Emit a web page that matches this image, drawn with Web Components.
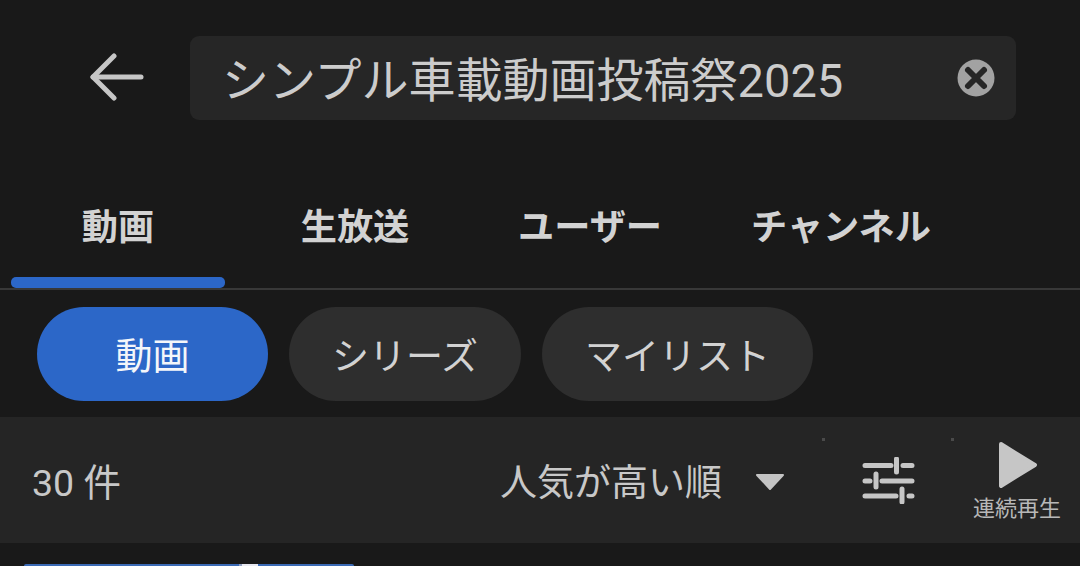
<!DOCTYPE html>
<html lang="ja">
<head>
<meta charset="utf-8">
<title>検索</title>
<style>
    html, body {
        margin: 0;
        height: 566px;
        overflow: hidden;
        background: #191919;
        color: #ccc;
        font-family: Roboto, "Noto Sans CJK JP", sans-serif;
    }
</style>
</head>
<body>
<search-header query="シンプル車載動画投稿祭2025"></search-header>
<tab-strip>
    <tab-item active>動画</tab-item>
    <tab-item>生放送</tab-item>
    <tab-item>ユーザー</tab-item>
    <tab-item>チャンネル</tab-item>
</tab-strip>
<chip-row>
    <filter-chip active style="width:231px">動画</filter-chip>
    <filter-chip style="width:232px">シリーズ</filter-chip>
    <filter-chip style="width:271px">マイリスト</filter-chip>
</chip-row>
<sort-bar count="30 件" sort="人気が高い順"></sort-bar>
<video-peek></video-peek>

<script>
class SearchHeader extends HTMLElement {
    constructor(){
        super();
        this.attachShadow({mode: "open"});
        this.shadowRoot.innerHTML = `
<style>
    :host {
        display: flex;
        align-items: center;
        height: 84px;
        padding: 36px 64px 0 90px;
    }
    .back {
        width: 54px;
        height: 48px;
        margin: 0 46px 2px 0;
        flex: none;
    }
    .box {
        flex: 1;
        height: 84px;
        display: flex;
        align-items: center;
        justify-content: space-between;
        padding: 0 21px 0 32px;
        background: #262626;
        border-radius: 9px;
    }
    .query {
        font-size: 47px;
        color: #ccc;
        white-space: nowrap;
        margin-bottom: 4px;
    }
    svg { display: block; }
</style>
<svg class="back" viewBox="0 0 54 48" fill="none" stroke="#c6c6c6" stroke-width="5" stroke-linecap="round" stroke-linejoin="round">
    <path d="M51 24H3"/>
    <path d="M24 3 3 24l21 21"/>
</svg>
<div class="box">
    <span class="query"></span>
    <svg width="38" height="38" viewBox="0 0 38 38">
        <circle cx="19" cy="19" r="18.500" fill="#a2a2a2"/>
        <path d="M11 11 27 27M27 11 11 27" stroke="#262626" stroke-width="6" stroke-linecap="round"/>
    </svg>
</div>`;
    }

    connectedCallback() {
        this.shadowRoot.querySelector(".query").textContent = this.getAttribute("query");
    }
}

class TabStrip extends HTMLElement {
    constructor(){
        super();
        this.attachShadow({mode: "open"});
        this.shadowRoot.innerHTML = `
<style>
    :host {
        display: grid;
        grid-template-columns: 214px 260px 210px 292px;
        height: 128px;
        margin-top: 40px;
        padding-left: 11px;
        border-bottom: 2px solid #383838;
    }
</style>
<slot></slot>`;
    }
}

class TabItem extends HTMLElement {
    constructor(){
        super();
        this.attachShadow({mode: "open"});
        this.shadowRoot.innerHTML = `
<style>
    :host {
        display: flex;
        justify-content: center;
        padding-top: 42px;
        font-size: 36.200px;
        font-weight: 700;
        line-height: 52px;
        color: #d2d2d2;
        white-space: nowrap;
        position: relative;
    }
    :host([active])::after {
        content: "";
        position: absolute;
        left: 0;
        right: 0;
        bottom: 0;
        height: 11px;
        background: #2c67c8;
        border-radius: 5px;
    }
</style>
<slot></slot>`;
    }
}

class ChipRow extends HTMLElement {
    constructor(){
        super();
        this.attachShadow({mode: "open"});
        this.shadowRoot.innerHTML = `
<style>
    :host {
        display: flex;
        gap: 21px;
        padding: 17px 37px 16px;
    }
</style>
<slot></slot>`;
    }
}

class FilterChip extends HTMLElement {
    constructor(){
        super();
        this.attachShadow({mode: "open"});
        this.shadowRoot.innerHTML = `
<style>
    :host {
        display: flex;
        align-items: center;
        justify-content: center;
        height: 94px;
        border-radius: 47px;
        background: #2e2e2e;
        color: #d2d2d2;
        font-size: 37px;
        white-space: nowrap;
    }
    :host([active]) {
        background: #2c67c8;
        color: #f4f6fa;
    }
</style>
<slot></slot>`;
    }
}

class SortBar extends HTMLElement {
    constructor(){
        super();
        this.attachShadow({mode: "open"});
        this.shadowRoot.innerHTML = `
<style>
    :host {
        display: flex;
        align-items: center;
        height: 126px;
        padding-left: 32px;
        background: #252525;
        color: #c8c8c8;
        font-size: 37.500px;
        position: relative;
    }
    .count { flex: 1; margin-bottom: 1px; }
    .sort { margin: 0 33px 0 0; font-size: 37px; white-space: nowrap; }
    .caret { margin: 3px 77px 0 0; }
    .filter { margin-right: 58px; }
    .play {
        width: 88px;
        height: 101px;
        margin-right: 19px;
        display: flex;
        flex-direction: column;
        align-items: center;
        align-self: flex-start;
        padding-top: 25px;
    }
    .play svg { margin-left: 1px; }
    .play span {
        margin-top: 7px;
        font-size: 22px;
        line-height: 28px;
        color: #b8b8b8;
        white-space: nowrap;
    }
    .speck {
        position: absolute;
        top: 21px;
        width: 3px;
        height: 3px;
        background: #4a4a4a;
    }
    svg { display: block; flex: none; }
</style>
<span class="count"></span>
<span class="sort"></span>
<svg class="caret" width="30" height="16" viewBox="0 0 30 16"><path d="M2 1h26L15 15Z" fill="#c4c4c4" stroke="#c4c4c4" stroke-width="2" stroke-linejoin="round"/></svg>
<svg class="filter" width="53" height="47" viewBox="0 0 53 47" fill="none" stroke="#c6c6c6" stroke-width="5" stroke-linecap="round">
    <path d="M3 8.500H29M41 8.500H50"/>
    <path d="M34.500 2V15"/>
    <path d="M3 24H8M20 24H50"/>
    <path d="M14 17V30"/>
    <path d="M3 39H34M47 39H50"/>
    <path d="M40 32V45"/>
</svg>
<div class="play">
    <svg width="40" height="46" viewBox="0 0 40 46"><path d="M3 2 37 23 3 44Z" fill="#c6c6c6" stroke="#c6c6c6" stroke-width="4" stroke-linejoin="round"/></svg>
    <span>連続再生</span>
</div>
<i class="speck" style="left:822px"></i>
<i class="speck" style="left:951px"></i>`;
    }

    connectedCallback() {
        this.shadowRoot.querySelector(".count").textContent = this.getAttribute("count");
        this.shadowRoot.querySelector(".sort").textContent = this.getAttribute("sort");
    }
}

class VideoPeek extends HTMLElement {
    constructor(){
        super();
        this.attachShadow({mode: "open"});
        this.shadowRoot.innerHTML = `
<style>
    :host {
        display: block;
        margin: 21px 0 0 24px;
        width: 330px;
        height: 2px;
        border-radius: 2px 2px 0 0;
        background: linear-gradient(90deg, #3b6ab5 0 65%, #8f9fc0 65% 66%, #e8e8f0 66% 71%, #3b6ab5 71% 100%);
    }
</style>`;
    }
}

customElements.define("search-header", SearchHeader);
customElements.define("tab-strip", TabStrip);
customElements.define("tab-item", TabItem);
customElements.define("chip-row", ChipRow);
customElements.define("filter-chip", FilterChip);
customElements.define("sort-bar", SortBar);
customElements.define("video-peek", VideoPeek);
</script>
</body>
</html>
